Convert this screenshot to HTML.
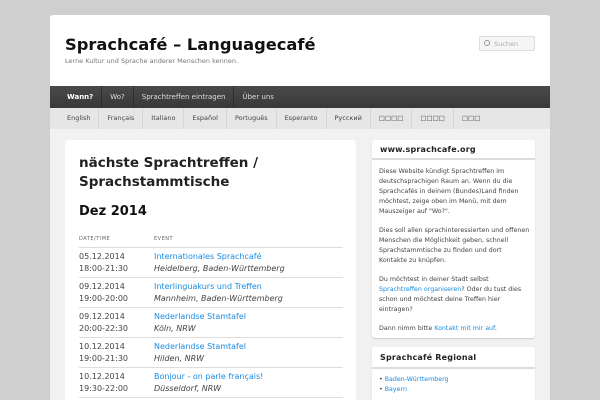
<!DOCTYPE html>
<html><head><meta charset="utf-8"><style>
*{margin:0;padding:0;box-sizing:border-box}
html,body{width:600px;height:400px;overflow:hidden}
body{background:#cfcfcf;font-family:"DejaVu Sans","Liberation Sans",sans-serif;position:relative}
.page{position:absolute;left:50px;top:15px;width:500px;height:385px;background:#f1f1f1;border-radius:3px 3px 0 0;overflow:hidden}
.hdr{height:71px;background:#fff;position:relative;border-radius:3px 3px 0 0}
.hdr h1{position:absolute;left:15px;top:20px;font-size:16.3px;font-weight:bold;color:#111}
.hdr .tag{position:absolute;left:15px;top:42px;font-size:6.5px;color:#777}
.search{position:absolute;left:429px;top:21px;width:56px;height:15px;border:1px solid #ddd;background:#f5f5f5;border-radius:2px;font-size:6.5px;color:#aaa;padding:3px 0 0 14px}
.search:before{content:"";position:absolute;left:4px;top:3px;width:4px;height:4px;border:1px solid #999;border-radius:50%}
.nav{height:22px;background:linear-gradient(#4a4a4a,#383838);display:flex;font-size:7px;color:#ddd}
.nav span{padding:7px 8px 0 8px;border-right:1px solid #2e2e2e}
.nav span:first-child{padding-left:17px;font-weight:bold;color:#fff}
.lang{height:21px;background:#e6e6e6;display:flex;font-size:6.5px;color:#444}
.lang span{padding:6px 8px 0 8px;border-right:1px solid #d6d6d6}
.lang span:first-child{padding-left:17px}
.main{position:absolute;left:15px;top:125px;width:291px;height:260px;overflow:hidden;background:#fff;border-radius:3px 3px 0 0;padding:14px 14px}
.main h2{font-size:13.5px;line-height:19px;font-weight:bold;color:#222}
.main h3{font-size:13px;font-weight:bold;color:#111;margin-top:12px}
table{border-collapse:collapse;width:264px;margin-top:17px;font-size:8px}
th{font-size:5px;letter-spacing:.5px;color:#666;font-weight:normal;text-align:left;padding-bottom:5px;border-bottom:1px solid #ddd}
td{border-bottom:1px solid #ddd;padding:3px 0 2px;line-height:12px;color:#444;vertical-align:top}
td.d{width:75px}
a{color:#1b8be0;text-decoration:none}
td i{color:#444}
.side{position:absolute;left:322px;width:163px;background:#fff;border-radius:3px;box-shadow:0 1px 1px #ccc;overflow:hidden}
.side .t{height:20px;border-bottom:2px solid #ddd;font-size:8px;font-weight:bold;color:#222;padding:5px 0 0 8px;letter-spacing:.2px}
.side .b{padding:7px 5px 6px 7px;font-size:6.3px;line-height:10px;color:#444}
.side p{margin-bottom:9px}
.side ul{list-style:none}
.side li:before{content:"• ";color:#444}
</style></head><body>
<div class="page">
 <div class="hdr"><h1>Sprachcafé – Languagecafé</h1><div class="tag">Lerne Kultur und Sprache anderer Menschen kennen.</div><div class="search">Suchen</div></div>
 <div class="nav"><span>Wann?</span><span>Wo?</span><span>Sprachtreffen eintragen</span><span style="border:none">Über uns</span></div>
 <div class="lang"><span>English</span><span>Français</span><span>Italiano</span><span>Español</span><span>Português</span><span>Esperanto</span><span>Русский</span><span>□□□□</span><span>□□□□</span><span style="border:none">□□□</span></div>
 <div class="main">
  <h2>nächste Sprachtreffen / Sprachstammtische</h2>
  <h3>Dez 2014</h3>
  <table>
   <tr><th>DATE/TIME</th><th>EVENT</th></tr>
   <tr><td class="d">05.12.2014<br>18:00-21:30</td><td><a>Internationales Sprachcafé</a><br><i>Heidelberg, Baden-Württemberg</i></td></tr>
   <tr><td class="d">09.12.2014<br>19:00-20:00</td><td><a>Interlinguakurs und Treffen</a><br><i>Mannheim, Baden-Württemberg</i></td></tr>
   <tr><td class="d">09.12.2014<br>20:00-22:30</td><td><a>Nederlandse Stamtafel</a><br><i>Köln, NRW</i></td></tr>
   <tr><td class="d">10.12.2014<br>19:00-21:30</td><td><a>Nederlandse Stamtafel</a><br><i>Hilden, NRW</i></td></tr>
   <tr><td class="d">10.12.2014<br>19:30-22:00</td><td><a>Bonjour - on parle français!</a><br><i>Düsseldorf, NRW</i></td></tr>
  </table>
 </div>
 <div class="side" style="top:125px;height:198px">
  <div class="t">www.sprachcafe.org</div>
  <div class="b">
   <p>Diese Website kündigt Sprachtreffen im deutschsprachigen Raum an. Wenn du die Sprachcafés in deinem (Bundes)Land finden möchtest, zeige oben im Menü, mit dem Mauszeiger auf "Wo?".</p>
   <p>Dies soll allen sprachinteressierten und offenen Menschen die Möglichkeit geben, schnell Sprachstammtische zu finden und dort Kontakte zu knüpfen.</p>
   <p>Du möchtest in deiner Stadt selbst <a>Sprachtreffen organiseren</a>? Oder du tust dies schon und möchtest deine Treffen hier eintragen?</p>
   <p>Dann nimm bitte <a>Kontakt mit mir auf</a>.</p>
  </div>
 </div>
 <div class="side" style="top:332px;height:53px;border-radius:3px 3px 0 0">
  <div class="t" style="height:22px;padding-top:6px">Sprachcafé Regional</div>
  <div class="b" style="padding-top:6px"><ul><li><a>Baden-Württemberg</a></li><li><a>Bayern</a></li></ul></div>
 </div>
</div>
</body></html>
